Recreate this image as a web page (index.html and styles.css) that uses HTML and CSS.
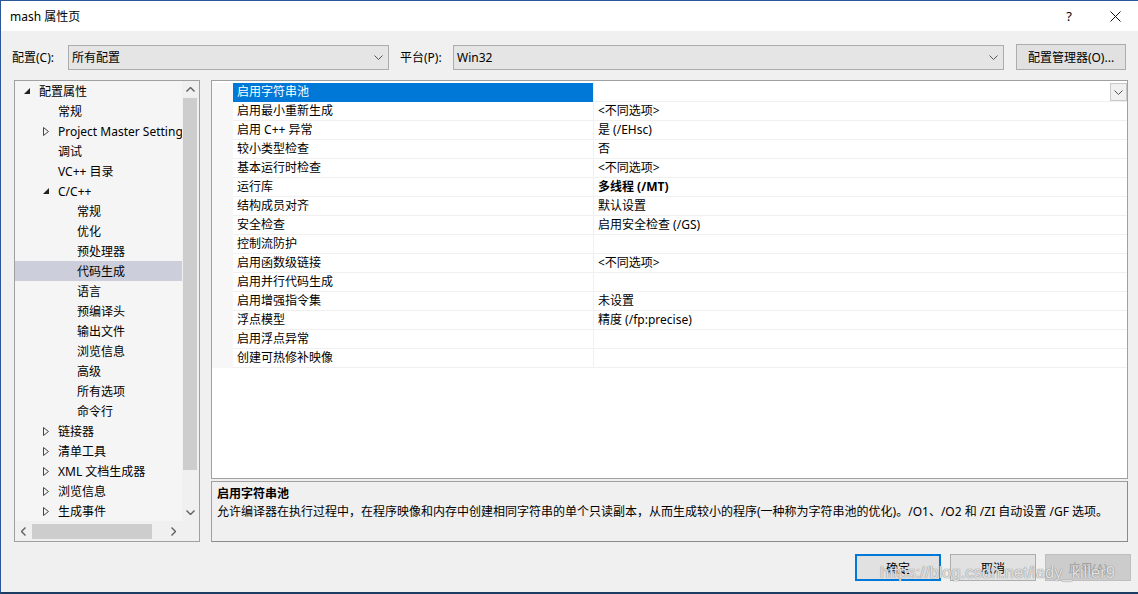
FILE: index.html
```html
<!DOCTYPE html>
<html lang="zh-CN">
<head>
  <meta charset="UTF-8" />
  <title>mash 属性页</title>
  <link rel="stylesheet" href="styles.css">
</head>
<body>
  <div class="window">
    <div class="titlebar">
      <span class="title">mash 属性页</span>
      <span class="tb-btn help">?</span>
      <span class="tb-btn">
        <svg width="11" height="11" viewBox="0 0 11 11"><path d="M0.5 0.5L10.5 10.5M10.5 0.5L0.5 10.5" stroke="#111" stroke-width="1" fill="none"/></svg>
      </span>
    </div>

    <div class="toolbar">
      <label class="lbl lbl-config">配置(C):</label>
      <div class="combo combo-config">
        <span>所有配置</span>
        <svg class="chev" width="9" height="5" viewBox="0 0 9 5"><path d="M0.5 0.5L4.5 4.5L8.5 0.5" stroke="#555" fill="none"/></svg>
      </div>
      <label class="lbl lbl-platform">平台(P):</label>
      <div class="combo combo-platform">
        <span>Win32</span>
        <svg class="chev" width="9" height="5" viewBox="0 0 9 5"><path d="M0.5 0.5L4.5 4.5L8.5 0.5" stroke="#555" fill="none"/></svg>
      </div>
      <button class="btn btn-manager">配置管理器(O)...</button>
    </div>

    <div class="main">
      <!-- tree of property pages -->
      <div class="tree">
        <div class="tree-list">
          <div class="node lv0"><span class="exp"><svg width="6" height="6"><polygon points="6,0 6,6 0,6" fill="#222"/></svg></span>配置属性</div>
          <div class="node lv1"><span class="exp"></span>常规</div>
          <div class="node lv1"><span class="exp"><svg width="6" height="9"><path d="M0.5 0.5L5.5 4.5L0.5 8.5Z" stroke="#444" fill="none"/></svg></span>Project Master Settings</div>
          <div class="node lv1"><span class="exp"></span>调试</div>
          <div class="node lv1"><span class="exp"></span>VC++ 目录</div>
          <div class="node lv1"><span class="exp"><svg width="6" height="6"><polygon points="6,0 6,6 0,6" fill="#222"/></svg></span>C/C++</div>
          <div class="node lv2"><span class="exp"></span>常规</div>
          <div class="node lv2"><span class="exp"></span>优化</div>
          <div class="node lv2"><span class="exp"></span>预处理器</div>
          <div class="node lv2 selected"><span class="exp"></span>代码生成</div>
          <div class="node lv2"><span class="exp"></span>语言</div>
          <div class="node lv2"><span class="exp"></span>预编译头</div>
          <div class="node lv2"><span class="exp"></span>输出文件</div>
          <div class="node lv2"><span class="exp"></span>浏览信息</div>
          <div class="node lv2"><span class="exp"></span>高级</div>
          <div class="node lv2"><span class="exp"></span>所有选项</div>
          <div class="node lv2"><span class="exp"></span>命令行</div>
          <div class="node lv1"><span class="exp"><svg width="6" height="9"><path d="M0.5 0.5L5.5 4.5L0.5 8.5Z" stroke="#444" fill="none"/></svg></span>链接器</div>
          <div class="node lv1"><span class="exp"><svg width="6" height="9"><path d="M0.5 0.5L5.5 4.5L0.5 8.5Z" stroke="#444" fill="none"/></svg></span>清单工具</div>
          <div class="node lv1"><span class="exp"><svg width="6" height="9"><path d="M0.5 0.5L5.5 4.5L0.5 8.5Z" stroke="#444" fill="none"/></svg></span>XML 文档生成器</div>
          <div class="node lv1"><span class="exp"><svg width="6" height="9"><path d="M0.5 0.5L5.5 4.5L0.5 8.5Z" stroke="#444" fill="none"/></svg></span>浏览信息</div>
          <div class="node lv1"><span class="exp"><svg width="6" height="9"><path d="M0.5 0.5L5.5 4.5L0.5 8.5Z" stroke="#444" fill="none"/></svg></span>生成事件</div>
        </div>
        <div class="vscroll">
          <div class="sb-arrow"><svg width="9" height="5"><path d="M0.5 4.5L4.5 0.5L8.5 4.5" stroke="#606060" stroke-width="1.4" fill="none"/></svg></div>
          <div class="sb-track"><div class="vthumb"></div></div>
          <div class="sb-arrow"><svg width="9" height="5"><path d="M0.5 0.5L4.5 4.5L8.5 0.5" stroke="#606060" stroke-width="1.4" fill="none"/></svg></div>
        </div>
        <div class="hscroll">
          <div class="sb-arrow h"><svg width="5" height="9"><path d="M4.5 0.5L0.5 4.5L4.5 8.5" stroke="#606060" stroke-width="1.4" fill="none"/></svg></div>
          <div class="sb-track h"><div class="hthumb"></div></div>
          <div class="sb-arrow h"><svg width="5" height="9"><path d="M0.5 0.5L4.5 4.5L0.5 8.5" stroke="#606060" stroke-width="1.4" fill="none"/></svg></div>
        </div>
        <div class="corner"></div>
      </div>

      <div class="right">
        <!-- property grid -->
        <div class="grid">
          <div class="row">
            <div class="gutter"></div>
            <div class="name selected">启用字符串池</div>
            <div class="value">
              <span class="dd"><svg width="9" height="5"><path d="M0.5 0.5L4.5 4.5L8.5 0.5" stroke="#555" fill="none"/></svg></span>
            </div>
          </div>
          <div class="row"><div class="gutter"></div><div class="name">启用最小重新生成</div><div class="value">&lt;不同选项&gt;</div></div>
          <div class="row"><div class="gutter"></div><div class="name">启用 C++ 异常</div><div class="value">是 (/EHsc)</div></div>
          <div class="row"><div class="gutter"></div><div class="name">较小类型检查</div><div class="value">否</div></div>
          <div class="row"><div class="gutter"></div><div class="name">基本运行时检查</div><div class="value">&lt;不同选项&gt;</div></div>
          <div class="row"><div class="gutter"></div><div class="name">运行库</div><div class="value bold">多线程 (/MT)</div></div>
          <div class="row"><div class="gutter"></div><div class="name">结构成员对齐</div><div class="value">默认设置</div></div>
          <div class="row"><div class="gutter"></div><div class="name">安全检查</div><div class="value">启用安全检查 (/GS)</div></div>
          <div class="row"><div class="gutter"></div><div class="name">控制流防护</div><div class="value"></div></div>
          <div class="row"><div class="gutter"></div><div class="name">启用函数级链接</div><div class="value">&lt;不同选项&gt;</div></div>
          <div class="row"><div class="gutter"></div><div class="name">启用并行代码生成</div><div class="value"></div></div>
          <div class="row"><div class="gutter"></div><div class="name">启用增强指令集</div><div class="value">未设置</div></div>
          <div class="row"><div class="gutter"></div><div class="name">浮点模型</div><div class="value">精度 (/fp:precise)</div></div>
          <div class="row"><div class="gutter"></div><div class="name">启用浮点异常</div><div class="value"></div></div>
          <div class="row"><div class="gutter"></div><div class="name">创建可热修补映像</div><div class="value"></div></div>
        </div>

        <div class="desc">
          <div class="desc-title">启用字符串池</div>
          <div class="desc-text">允许编译器在执行过程中，在程序映像和内存中创建相同字符串的单个只读副本，从而生成较小的程序(一种称为字符串池的优化)。/O1、/O2 和 /ZI 自动设置 /GF 选项。</div>
        </div>
      </div>
    </div>

    <div class="footer">
      <button class="btn btn-default">确定</button>
      <button class="btn">取消</button>
      <button class="btn btn-disabled">应用(A)</button>
    </div>

    <div class="watermark">https://blog.csdn.net/lady_killer9</div>
  </div>
</body>
</html>
```

FILE: styles.css
```css
* {
  box-sizing: border-box;
}
body {
  margin: 0;
  font-family: "Noto Sans", "Noto Sans CJK SC", sans-serif;
  font-size: 12px;
  color: #000;
}
.window {
  position: relative;
  width: 1138px;
  height: 594px;
  display: flex;
  flex-direction: column;
  background: #f0f0f0;
  border-top: 1px solid #2b5797;
  border-left: 1px solid #2b5797;
  border-bottom: 2px solid #1d3c64;
  overflow: hidden;
}

/* title bar */
.titlebar {
  flex: none;
  height: 30px;
  background: #fff;
  display: flex;
  align-items: center;
  padding-left: 9px;
}
.title {
  flex: 1;
}
.tb-btn {
  width: 46px;
  height: 30px;
  display: flex;
  align-items: center;
  justify-content: center;
}
.help {
  font-size: 13px;
}

/* config / platform row */
.toolbar {
  flex: none;
  display: flex;
  align-items: center;
  padding: 13px 0 0 11px;
}
.lbl {
  display: block;
}
.lbl-config {
  width: 56px;
}
.lbl-platform {
  width: 53px;
  margin-left: 11px;
}
.combo {
  height: 25px;
  display: flex;
  align-items: center;
  justify-content: space-between;
  padding: 0 5px 0 3px;
  background: #e5e5e5;
  border: 1px solid #acacac;
}
.combo-config {
  width: 321px;
}
.combo-platform {
  width: 551px;
}
.btn {
  font-family: inherit;
  font-size: 12px;
  color: #000;
  background: #e1e1e1;
  border: 1px solid #adadad;
  padding: 0;
}
.btn-manager {
  width: 110px;
  height: 26px;
  margin-left: 12px;
}

/* main area */
.main {
  flex: none;
  display: flex;
  gap: 11px;
  height: 462px;
  margin-top: 10px;
  padding-left: 13px;
}
.tree {
  width: 186px;
  border: 1px solid #a0a0a0;
  background: #f5f5f5;
  display: grid;
  grid-template-columns: 1fr 17px;
  grid-template-rows: 1fr 20px;
}
.tree-list {
  overflow: hidden;
  white-space: nowrap;
}
.node {
  height: 20px;
  display: flex;
  align-items: center;
}
.node.selected {
  background: #cccedb;
}
.lv0 { padding-left: 5px; }
.lv1 { padding-left: 24px; }
.lv2 { padding-left: 43px; }
.exp {
  flex: none;
  width: 19px;
  display: flex;
  align-items: center;
  padding-left: 4px;
}
.vscroll {
  background: #f0f0f0;
  display: flex;
  flex-direction: column;
}
.sb-arrow {
  flex: none;
  height: 17px;
  display: flex;
  align-items: center;
  justify-content: center;
}
.sb-arrow.h {
  width: 17px;
  height: auto;
}
.sb-track {
  flex: 1;
}
.vthumb {
  width: 14px;
  height: 372px;
  margin-left: 1px;
  background: #cdcdcd;
}
.hscroll {
  background: #f0f0f0;
  display: flex;
}
.sb-track.h {
  display: flex;
  align-items: center;
}
.hthumb {
  width: 120px;
  height: 15px;
  background: #cdcdcd;
}
.corner {
  background: #f0f0f0;
}

/* property grid */
.right {
  width: 917px;
  display: flex;
  flex-direction: column;
  gap: 2px;
}
.grid {
  flex: 1;
  background: #fff;
  border: 1px solid #a0a0a0;
  padding-top: 2px;
}
.row {
  display: grid;
  grid-template-columns: 21px 360px 1fr;
  height: 19px;
}
.gutter {
  background: #f7f7f7;
}
.name, .value {
  padding-left: 4px;
  line-height: 18px;
  border-bottom: 1px solid #f0f0f0;
  white-space: nowrap;
}
.value {
  border-left: 1px solid #f0f0f0;
  display: flex;
  justify-content: space-between;
}
.name.selected {
  background: #0078d7;
  color: #fff;
  border-bottom-color: #0078d7;
}
.bold {
  font-weight: bold;
}
.dd {
  margin-left: auto;
  width: 17px;
  height: 18px;
  display: flex;
  align-items: center;
  justify-content: center;
  background: #f0f0f0;
  border: 1px solid #c8c8c8;
}
.desc {
  height: 61px;
  border: 1px solid #a0a0a0;
  border-right-color: #8a8a8a;
  border-bottom-color: #8a8a8a;
  padding: 3px 5px;
  line-height: 18px;
}
.desc-title {
  font-weight: bold;
}

/* footer buttons */
.footer {
  flex: none;
  display: flex;
  justify-content: flex-end;
  gap: 9px;
  margin-top: 12px;
  padding-right: 7px;
}
.footer .btn {
  width: 86px;
  height: 27px;
}
.btn-default {
  border: 2px solid #0078d7;
}
.btn-disabled {
  background: #cccccc;
  border-color: #bfbfbf;
  color: #a0a0a0;
}

.watermark {
  position: absolute;
  left: 879px;
  top: 562px;
  font-family: "Liberation Sans", sans-serif;
  font-size: 16.5px;
  color: rgba(255, 255, 255, 0.75);
  text-shadow: 0 0 1px #888, 0 0 1px #888;
  pointer-events: none;
}
```
